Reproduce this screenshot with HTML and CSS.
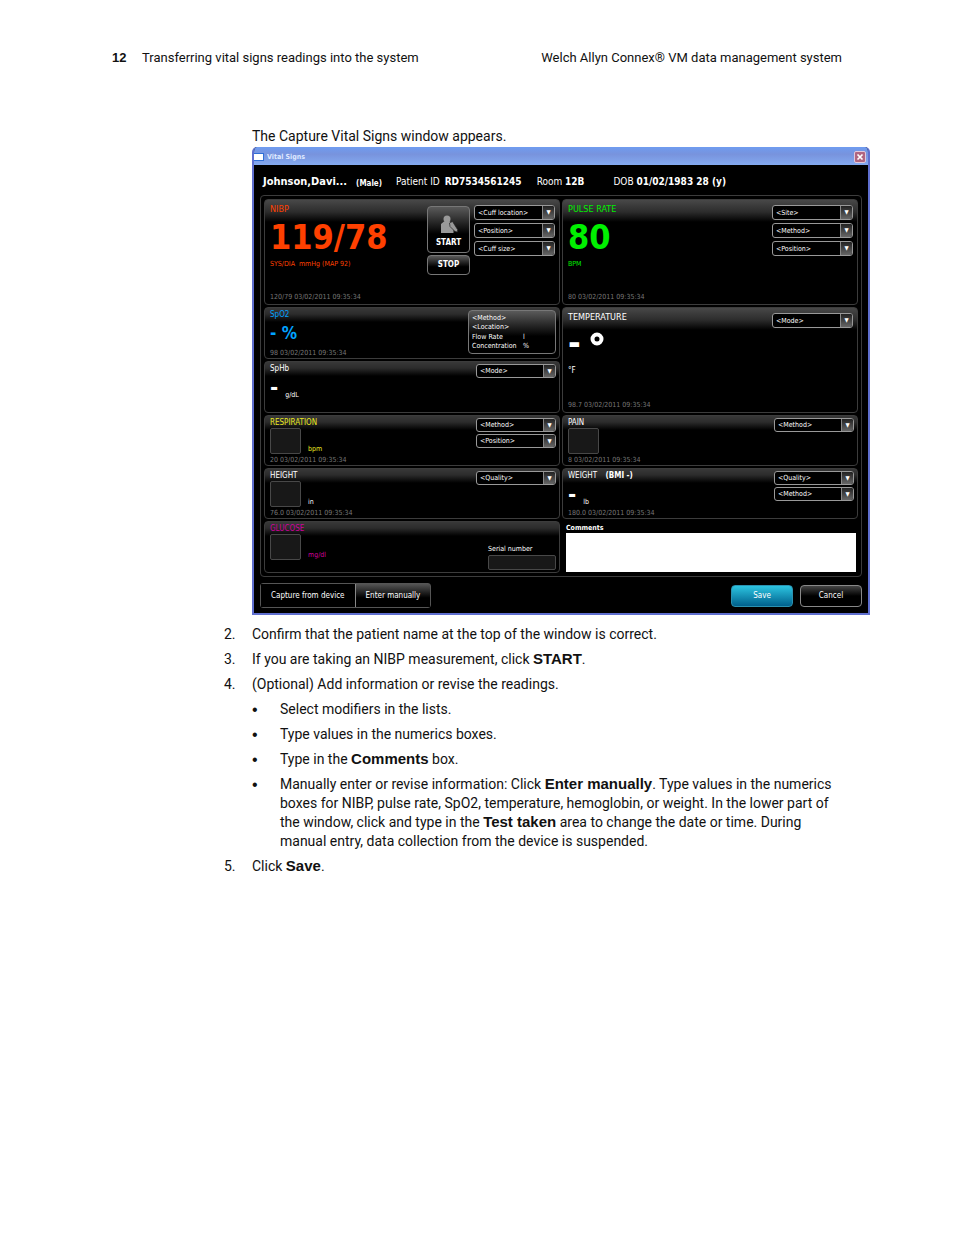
FILE: index.html
```
<!DOCTYPE html>
<html lang="en">
<head>
    <meta charset="UTF-8">
    <meta name="viewport" content="width=device-width, initial-scale=1.0">
    <title>Transferring vital signs readings into the system</title>
    <link rel="stylesheet" href="styles.css">
</head>
<body>
    <header class="page-header">
        <p><strong class="page-number">12</strong>Transferring vital signs readings into the system</p>
        <p class="product">Welch Allyn Connex® VM data management system</p>
    </header>

    <main>
        <p class="intro">The Capture Vital Signs window appears.</p>

        <section class="window">
            <div class="title-bar">
                <svg class="window-icon" viewBox="0 0 10 8"><rect width="10" height="8" fill="#2f6fd6"/><rect y="1" width="9" height="6" fill="#fff"/></svg>
                <span class="window-title">Vital Signs</span>
                <button class="close" aria-label="Close"><svg viewBox="0 0 12 12"><path d="M3 3l6 6M9 3l-6 6" stroke="#fff" stroke-width="2"/></svg></button>
            </div>

            <div class="patient">
                <span class="name">Johnson,Davi...</span>
                <strong class="sex">(Male)</strong>
                <span class="patient-id">Patient ID <strong>RD7534561245</strong></span>
                <span class="room">Room <strong>12B</strong></span>
                <span>DOB <strong>01/02/1983 28 (y)</strong></span>
            </div>

            <div class="panels">
                <div class="panel tall nibp">
                    <div class="reading">
                        <h2>NIBP</h2>
                        <p class="value">119/78</p>
                        <p class="unit">SYS/DIA&nbsp; mmHg (MAP 92)</p>
                        <p class="stamp">120/79 03/02/2011 09:35:34</p>
                    </div>
                    <div class="pump">
                        <button class="btn start">
                            <svg viewBox="0 0 18 19"><circle cx="7" cy="4" r="3.500" fill="#999"/><path d="M4 6.500h6l2 2v4l1.500 2V18H1V9z" fill="#999"/><path d="M9.500 8l3-1.500 5 8v2.500l-2.500-.5-5-5z" fill="#999" stroke="#222" stroke-width=".7"/></svg>
                            START
                        </button>
                        <button class="btn stop">STOP</button>
                    </div>
                    <div class="lists">
                        <label class="drop"><select aria-label="Cuff location"><option>&lt;Cuff location&gt;</option></select><span class="arrow">▼</span></label>
                        <label class="drop"><select aria-label="Position"><option>&lt;Position&gt;</option></select><span class="arrow">▼</span></label>
                        <label class="drop"><select aria-label="Cuff size"><option>&lt;Cuff size&gt;</option></select><span class="arrow">▼</span></label>
                    </div>
                </div>

                <div class="panel tall pulse">
                    <div class="reading">
                        <h2>PULSE RATE</h2>
                        <p class="value">80</p>
                        <p class="unit">BPM</p>
                        <p class="stamp">80 03/02/2011 09:35:34</p>
                    </div>
                    <div class="lists">
                        <label class="drop"><select aria-label="Site"><option>&lt;Site&gt;</option></select><span class="arrow">▼</span></label>
                        <label class="drop"><select aria-label="Method"><option>&lt;Method&gt;</option></select><span class="arrow">▼</span></label>
                        <label class="drop"><select aria-label="Position"><option>&lt;Position&gt;</option></select><span class="arrow">▼</span></label>
                    </div>
                </div>

                <div class="panel spo2">
                    <div class="reading">
                        <h2>SpO2</h2>
                        <p class="percent">- %</p>
                        <p class="stamp">98 03/02/2011 09:35:34</p>
                    </div>
                    <button class="btn oxygen">
                        <span>&lt;Method&gt;</span><span></span>
                        <span>&lt;Location&gt;</span><span></span>
                        <span>Flow Rate</span><span>l</span>
                        <span>Concentration</span><span>%</span>
                    </button>
                </div>

                <div class="panel tall temperature">
                    <div class="reading">
                        <h2>TEMPERATURE</h2>
                        <p class="value">-<svg class="degree" viewBox="0 0 14 14"><circle cx="7" cy="7" r="4.500" fill="none" stroke="#fff" stroke-width="4"/></svg></p>
                        <p class="unit">°F</p>
                        <p class="stamp">98.7 03/02/2011 09:35:34</p>
                    </div>
                    <div class="lists">
                        <label class="drop"><select aria-label="Mode"><option>&lt;Mode&gt;</option></select><span class="arrow">▼</span></label>
                    </div>
                </div>

                <div class="panel">
                    <div class="reading">
                        <h2>SpHb</h2>
                        <p class="row"><strong class="dash">-</strong><span>g/dL</span></p>
                    </div>
                    <div class="lists">
                        <label class="drop"><select aria-label="Mode"><option>&lt;Mode&gt;</option></select><span class="arrow">▼</span></label>
                    </div>
                </div>

                <div class="panel respiration">
                    <div class="reading">
                        <h2><label for="respiration">RESPIRATION</label></h2>
                        <p class="row"><input class="box" id="respiration" type="text"><span>bpm</span></p>
                        <p class="stamp">20 03/02/2011 09:35:34</p>
                    </div>
                    <div class="lists">
                        <label class="drop"><select aria-label="Method"><option>&lt;Method&gt;</option></select><span class="arrow">▼</span></label>
                        <label class="drop"><select aria-label="Position"><option>&lt;Position&gt;</option></select><span class="arrow">▼</span></label>
                    </div>
                </div>

                <div class="panel">
                    <div class="reading">
                        <h2><label for="pain">PAIN</label></h2>
                        <p class="row"><input class="box" id="pain" type="text"></p>
                        <p class="stamp">8 03/02/2011 09:35:34</p>
                    </div>
                    <div class="lists">
                        <label class="drop"><select aria-label="Method"><option>&lt;Method&gt;</option></select><span class="arrow">▼</span></label>
                    </div>
                </div>

                <div class="panel">
                    <div class="reading">
                        <h2><label for="height">HEIGHT</label></h2>
                        <p class="row"><input class="box" id="height" type="text"><span>in</span></p>
                        <p class="stamp">76.0 03/02/2011 09:35:34</p>
                    </div>
                    <div class="lists">
                        <label class="drop"><select aria-label="Quality"><option>&lt;Quality&gt;</option></select><span class="arrow">▼</span></label>
                    </div>
                </div>

                <div class="panel">
                    <div class="reading">
                        <h2>WEIGHT <strong class="bmi">(BMI -)</strong></h2>
                        <p class="row"><strong class="dash">-</strong><span>lb</span></p>
                        <p class="stamp">180.0 03/02/2011 09:35:34</p>
                    </div>
                    <div class="lists">
                        <label class="drop"><select aria-label="Quality"><option>&lt;Quality&gt;</option></select><span class="arrow">▼</span></label>
                        <label class="drop"><select aria-label="Method"><option>&lt;Method&gt;</option></select><span class="arrow">▼</span></label>
                    </div>
                </div>

                <div class="panel glucose">
                    <div class="reading">
                        <h2><label for="glucose">GLUCOSE</label></h2>
                        <p class="row"><input class="box" id="glucose" type="text"><span>mg/dl</span></p>
                    </div>
                    <div class="serial">
                        <label for="serial">Serial number</label>
                        <input class="box" id="serial" type="text">
                    </div>
                </div>

                <div class="comments">
                    <label for="comments">Comments</label>
                    <textarea id="comments"></textarea>
                </div>
            </div>

            <div class="actions">
                <div class="tabs">
                    <button class="tab">Capture from device</button>
                    <button class="tab active">Enter manually</button>
                </div>
                <button class="action save">Save</button>
                <button class="action">Cancel</button>
            </div>
        </section>

        <ol class="steps">
            <li><span>2.</span><p>Confirm that the patient name at the top of the window is correct.</p></li>
            <li><span>3.</span><p>If you are taking an NIBP measurement, click <strong>START</strong>.</p></li>
            <li><span>4.</span><p>(Optional) Add information or revise the readings.</p>
                <ul>
                    <li><span class="bullet">•</span><p>Select modifiers in the lists.</p></li>
                    <li><span class="bullet">•</span><p>Type values in the numerics boxes.</p></li>
                    <li><span class="bullet">•</span><p>Type in the <strong>Comments</strong> box.</p></li>
                    <li><span class="bullet">•</span><p>Manually enter or revise information: Click <strong>Enter manually</strong>. Type values in the numerics boxes for NIBP, pulse rate, SpO2, temperature, hemoglobin, or weight. In the lower part of the window, click and type in the <strong>Test taken</strong> area to change the date or time. During manual entry, data collection from the device is suspended.</p></li>
                </ul>
            </li>
            <li><span>5.</span><p>Click <strong>Save</strong>.</p></li>
        </ol>
    </main>
</body>
</html>
```
FILE: styles.css
```
* {
    box-sizing: border-box;
}
body {
    margin: 0;
    padding: 48px 84px 48px 112px;
    background: #fff;
    color: #111;
    font-family: Roboto, sans-serif;
    font-size: 14px;
    line-height: 19px;
}
p, h2, ol, ul {
    margin: 0;
    padding: 0;
}
button, input, select, textarea {
    font: inherit;
    color: inherit;
    margin: 0;
}
strong {
    font-family: "Liberation Sans", sans-serif;
    font-size: 15px;
    line-height: 1;
}
.page-header {
    display: flex;
    justify-content: space-between;
    padding-right: 28px;
    font-size: 13px;
    line-height: 20px;
}
.page-number {
    display: inline-block;
    width: 30px;
    font-size: 13px;
}
.intro {
    margin: 59px 0 1px 140px;
}

/* Vital Signs window */
.window {
    margin-left: 140px;
    border: 2px solid #5f6fcf;
    border-top: 0;
    border-radius: 5px 5px 0 0;
    background: #000;
    color: #fff;
    font-family: "DejaVu Sans Condensed", "DejaVu Sans", sans-serif;
    font-size: 8px;
    line-height: 10px;
    overflow: hidden;
}
.window strong {
    font-family: inherit;
    font-size: inherit;
}
.title-bar {
    display: flex;
    align-items: center;
    gap: 3px;
    height: 18px;
    padding: 1px 2px 0 0;
    background: linear-gradient(#6f9cf0, #7893dd 40%, #84aaf0);
    color: #dfe9ff;
    font-size: 7px;
    font-weight: bold;
}
.window-icon {
    width: 10px;
    height: 8px;
}
.window-title {
    flex: 1;
}
.close {
    width: 12px;
    height: 12px;
    padding: 0;
    border: 1px solid #e0c8dc;
    border-radius: 2px;
    background: #b06580;
}
.close svg {
    display: block;
}
.patient {
    display: flex;
    align-items: center;
    height: 30px;
    padding: 4px 9px 0;
    font-size: 10px;
}
.name {
    margin-right: 9px;
    font-size: 11px;
    font-weight: bold;
}
.patient .sex {
    margin-right: 14px;
    padding-top: 3px;
    font-size: 8px;
}
.patient-id {
    margin-right: 15px;
}
.patient-id strong {
    margin-left: 2px;
}
.room {
    margin-right: 29px;
}
.panels {
    display: grid;
    grid-template-columns: 1fr 1fr;
    grid-template-rows: minmax(106px, auto) repeat(2, minmax(52px, auto)) repeat(2, minmax(51px, auto)) minmax(52px, auto);
    gap: 2px;
    margin: 0 6px;
    padding: 3px;
    border: 1px solid #3c3c3c;
    border-radius: 4px;
}
.panel {
    display: flex;
    gap: 4px;
    padding: 2px 3px 0 5px;
    border: 1px solid #3c3c3c;
    border-radius: 4px;
    background: linear-gradient(#383838, #2c2c2c 6px, #000 14px);
}
.panel.tall {
    padding: 4px 4px 2px 5px;
    background: linear-gradient(#484848, #2c2c2c 12px, #000 22px);
}
.temperature {
    grid-row: span 2;
}
.reading {
    display: flex;
    flex-direction: column;
    flex: 1;
}
h2 {
    font-size: 8px;
    font-weight: normal;
}
.tall h2 {
    font-size: 9px;
}
.value {
    margin-top: 7px;
    font-size: 34px;
    font-weight: bold;
    line-height: 32px;
}
.nibp .unit, .pulse .unit {
    margin-top: 6px;
    font-size: 7px;
}
.stamp {
    margin: auto 0 0;
    color: #777;
    font-size: 7px;
}
.nibp {
    color: #ff4000;
}
.pulse {
    color: #00f000;
}
.spo2 {
    color: #00a2ff;
}
.respiration h2, .respiration .row {
    color: #e8e820;
}
.glucose h2, .glucose .row {
    color: #d0009c;
}
.temperature .value {
    display: flex;
    align-items: flex-start;
    gap: 9px;
    margin-top: 4px;
}
.degree {
    width: 14px;
    height: 14px;
    margin-top: 6px;
}
.temperature .unit {
    margin-top: 8px;
}
.percent {
    margin-top: 5px;
    font-size: 17px;
    font-weight: bold;
    line-height: 16px;
}
.row {
    display: flex;
    align-items: flex-end;
    gap: 7px;
    height: 26px;
    font-size: 7px;
}
.window .dash {
    align-self: flex-start;
    font-size: 22px;
    line-height: 28px;
}
.bmi {
    margin-left: 6px;
}
.box {
    width: 31px;
    height: 26px;
    padding: 2px;
    border: 1px solid #484848;
    border-radius: 2px;
    background: #181818;
}
.lists {
    display: flex;
    flex-direction: column;
    gap: 2px;
    width: 80px;
    color: #fff;
}
.tall .lists {
    gap: 3px;
    width: 81px;
    padding-top: 1px;
}
.drop {
    display: flex;
    height: 14px;
    border: 1px solid #999;
    border-radius: 3px;
    background: #000;
    overflow: hidden;
}
.tall .drop {
    height: 15px;
}
.drop select {
    flex: 1;
    min-width: 0;
    padding: 0 3px;
    border: 0;
    background: none;
    appearance: none;
    font-size: 7px;
}
.arrow {
    width: 12px;
    border-left: 1px solid #888;
    background: linear-gradient(#222, #666);
    font-size: 6px;
    line-height: 12px;
    text-align: center;
    pointer-events: none;
}
.btn {
    padding: 0;
    border: 1px solid #777;
    border-radius: 4px;
    background: linear-gradient(#5a5a5a, #000 60%);
    color: #fff;
}
.pump {
    display: flex;
    flex-direction: column;
    gap: 2px;
    width: 43px;
    padding-top: 2px;
    font-weight: bold;
}
.start {
    display: flex;
    flex-direction: column;
    align-items: center;
    justify-content: flex-end;
    gap: 4px;
    height: 47px;
    padding-bottom: 4px;
}
.start svg {
    width: 18px;
    height: 19px;
}
.stop {
    height: 20px;
}
.oxygen {
    display: grid;
    grid-template-columns: 1fr 32px;
    align-self: flex-start;
    width: 88px;
    height: 44px;
    padding: 3px 0 2px 3px;
    font-size: 7px;
    line-height: 9px;
    text-align: left;
}
.serial {
    align-self: flex-end;
    width: 68px;
    padding-bottom: 2px;
    font-size: 7px;
}
.serial label {
    display: block;
    margin-bottom: 1px;
}
.serial .box {
    display: block;
    width: 100%;
    height: 15px;
}
.comments {
    display: flex;
    flex-direction: column;
    padding: 2px 2px 1px 4px;
    font-size: 7px;
    font-weight: bold;
}
.comments textarea {
    flex: 1;
    min-height: 0;
    border: 0;
    background: #fff;
    color: #000;
    resize: none;
}
.actions {
    display: flex;
    align-items: center;
    gap: 7px;
    padding: 6px 6px 5px;
}
.tabs {
    display: flex;
    margin-right: auto;
    border: 1px solid #555;
    border-radius: 3px;
}
.tab {
    height: 23px;
    padding: 0 10px;
    border: 0;
    background: #000;
}
.tab.active {
    border-left: 1px solid #888;
    background: linear-gradient(#555, #000 60%);
}
.action {
    width: 62px;
    height: 22px;
    padding: 0;
    border: 1px solid #888;
    border-radius: 4px;
    background: linear-gradient(#444, #000 50%);
}
.save {
    border-color: #2b91b0;
    background: linear-gradient(#2cc4e0, #00608c);
}

/* Instructions */
.steps {
    margin: 10px 0 0 112px;
    padding-right: 26px;
    list-style: none;
}
.steps ul {
    grid-column: 2;
    list-style: none;
}
.steps li {
    display: grid;
    grid-template-columns: 28px 1fr;
    row-gap: 6px;
    margin-bottom: 6px;
}
.steps ul li:last-child {
    margin-bottom: 0;
}
.bullet {
    font-family: "Liberation Sans", sans-serif;
    font-size: 16px;
}
```
